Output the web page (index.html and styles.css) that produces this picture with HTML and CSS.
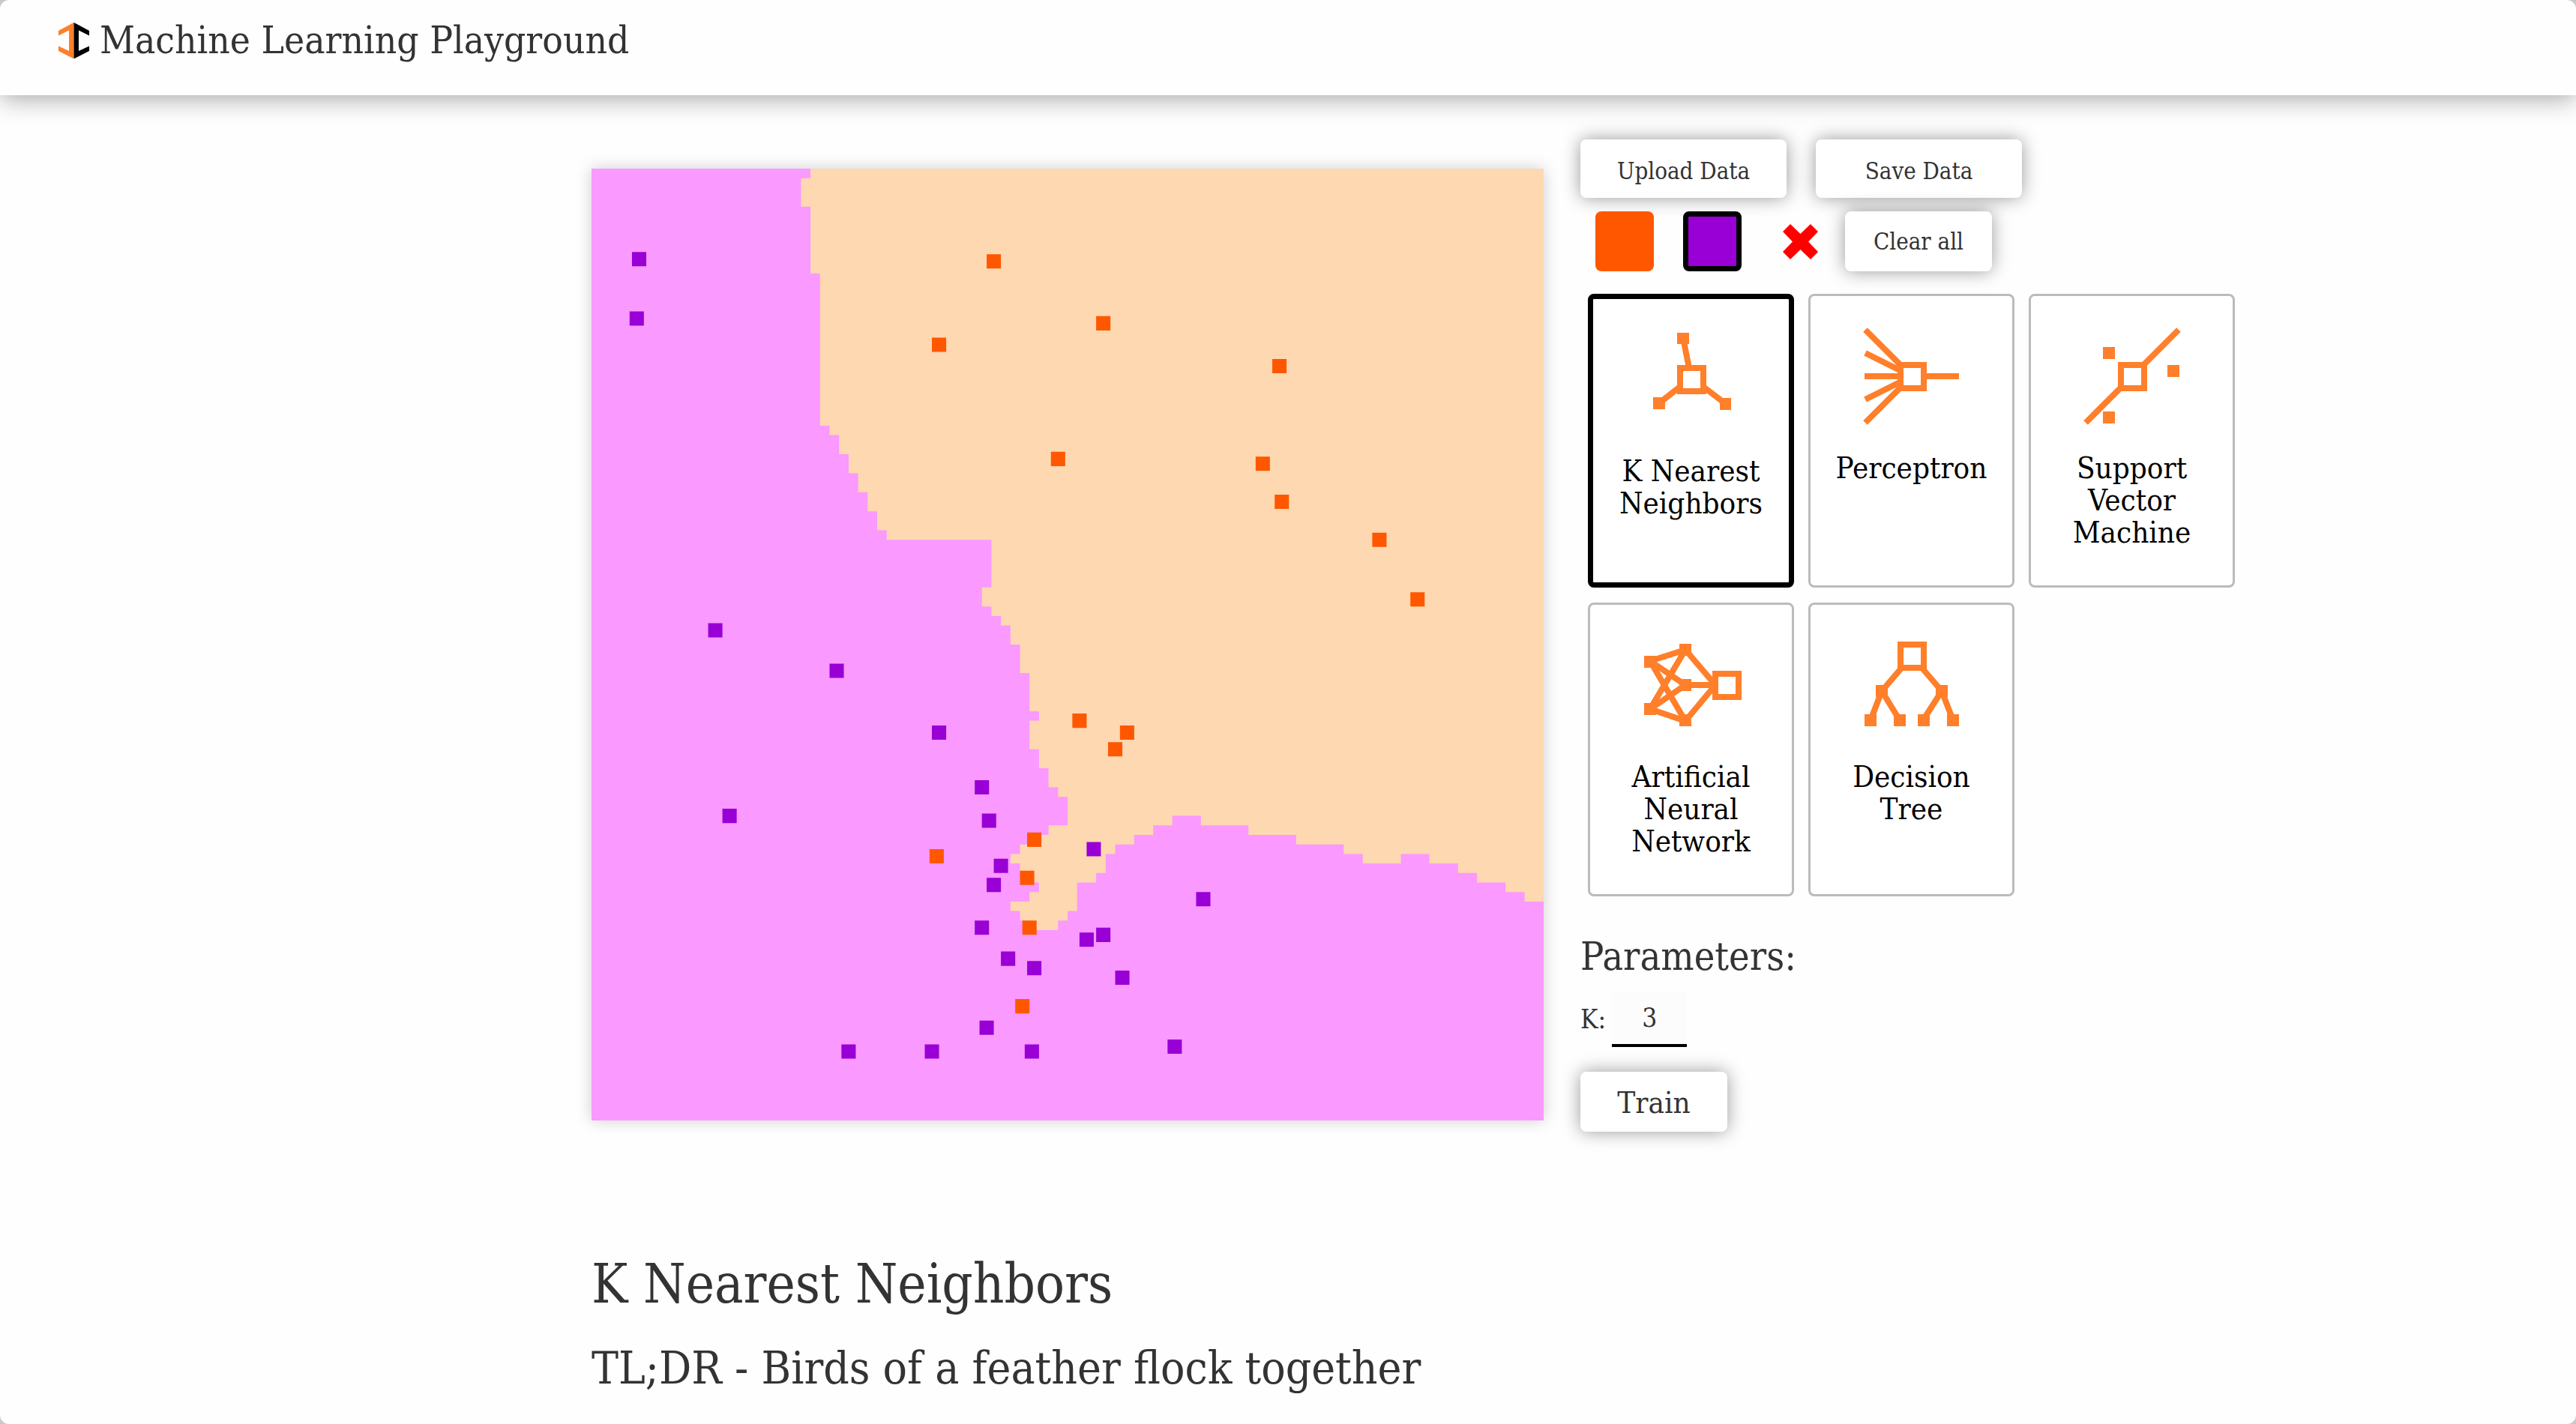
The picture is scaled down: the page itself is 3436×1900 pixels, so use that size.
FILE: index.html
```html
<!DOCTYPE html>
<html lang="en">
<head>
<meta charset="utf-8">
<title>Machine Learning Playground</title>
<link rel="stylesheet" href="styles.css">
</head>
<body>
<div class="page">
  <header class="topbar">
    <a class="brand" href="#">
      <svg class="brand-logo" viewBox="0 0 41 48" aria-hidden="true">
        <path fill="#ff7f2a" d="M20.500 0 0 11v6.500l14-7v27.500l-14-6.500v6.500l20.500 10.500z"/>
        <path fill="#000" d="M20.500 0 41 11v6.500l-14-7v27.500l14-6.500v6.500l-20.500 10.500z"/>
      </svg>
      <span>Machine Learning Playground</span>
    </a>
  </header>

  <main class="content">
    <section class="workspace">
      <svg class="plot" viewBox="0 0 400 400" role="img" aria-label="Classified points">
        <rect width="400" height="400" fill="#fa99ff"/>
        <path fill="#fed8b1" transform="scale(4)" d="M23 0V1H22V4H23V11H24V27H25V28H26V30H27V32H28V34H29V36H30V38H31V39H42V44H41V46H42V47H43V48H44V50H45V53H46V57H47V58H46V61H47V63H48V65H49V66H50V69H48V70H47V71H45V72H44V73H45V74H46V75H47V76H46V77H44V78H45V79H46V80H49V79H50V78H51V75H53V74H54V72H55V71H57V70H59V69H61V68H64V69H69V70H74V71H79V72H81V73H85V72H88V73H91V74H93V75H96V76H98V77H100V0Z"/>
        <path fill="#9800d6" d="M17 35h6v6h-6zM16 60h6v6h-6zM49 191h6v6h-6zM100 208h6v6h-6zM143 234h6v6h-6zM161 257h6v6h-6zM164 271h6v6h-6zM169 290h6v6h-6zM166 298h6v6h-6zM161 316h6v6h-6zM172 329h6v6h-6zM183 333h6v6h-6zM163 358h6v6h-6zM140 368h6v6h-6zM182 368h6v6h-6zM205 321h6v6h-6zM212 319h6v6h-6zM220 337h6v6h-6zM242 366h6v6h-6zM254 304h6v6h-6zM208 283h6v6h-6zM55 269h6v6h-6zM105 368h6v6h-6z"/>
        <path fill="#ff5700" d="M166 36h6v6h-6zM143 71h6v6h-6zM212 62h6v6h-6zM193 119h6v6h-6zM286 80h6v6h-6zM279 121h6v6h-6zM287 137h6v6h-6zM328 153h6v6h-6zM344 178h6v6h-6zM202 229h6v6h-6zM222 234h6v6h-6zM217 241h6v6h-6zM183 279h6v6h-6zM142 286h6v6h-6zM180 295h6v6h-6zM181 316h6v6h-6zM178 349h6v6h-6z"/>
      </svg>

      <div class="controls">
        <div class="row row-data">
          <button class="btn btn-wide" type="button">Upload Data</button>
          <button class="btn btn-wide" type="button">Save Data</button>
        </div>
        <div class="row row-brush">
          <button class="swatch swatch-orange" type="button" aria-label="Orange"></button>
          <button class="swatch swatch-purple is-active" type="button" aria-label="Purple"></button>
          <button class="swatch swatch-erase" type="button" aria-label="Erase">
            <svg class="cross" viewBox="0 0 47 47" aria-hidden="true"><path fill="#f00" d="M10 0 23.500 13 37 0 47 10 34 23.500 47 37 37 47 23.500 34 10 47 0 37 13 23.500 0 10z"/></svg>
          </button>
          <button class="btn btn-clear" type="button">Clear all</button>
        </div>

        <div class="models">
          <button class="model is-active" type="button">
            <svg class="model-icon" viewBox="0 0 140 140" aria-hidden="true">
              <path class="line" d="M59 15 70 70M27 102 70 68M116 103 70 68"/>
              <path class="dot" d="M51 8h16v15H51zM19 94h16v16H19zM108 95h15v16h-15z"/>
              <path class="node" d="M55 55h31v31H55z"/>
            </svg>
            K Nearest Neighbors
          </button>
          <button class="model" type="button">
            <svg class="model-icon" viewBox="0 0 140 140" aria-hidden="true">
              <path class="line" d="M8 8 70 70M8 39 70 70M7 70H133M8 101 70 70M8 132 70 70"/>
              <path class="node" d="M55 55h31v31H55z"/>
            </svg>
            Perceptron
          </button>
          <button class="model" type="button">
            <svg class="model-icon" viewBox="0 0 140 140" aria-hidden="true">
              <path class="line" d="M8 132 132 8"/>
              <path class="dot" d="M31 31h16v16H31zM117 55h16v16h-16zM31 117h16v16H31z"/>
              <path class="node" d="M55 55h31v31H55z"/>
            </svg>
            Support Vector Machine
          </button>
          <button class="model" type="button">
            <svg class="model-icon" viewBox="0 0 140 140" aria-hidden="true">
              <path class="line" d="M15 38 62 23 15 102 62 118 15 38 62 70 15 102M62 23 102 70 62 118M62 70H100"/>
              <path class="dot" d="M7 31h16v16H7zM7 94h16v16H7zM54 15h16v16H54zM54 62h16v16H54zM54 109h16v16H54z"/>
              <path class="node" d="M102 55h31v31h-31z"/>
            </svg>
            Artificial Neural Network
          </button>
          <button class="model" type="button">
            <svg class="model-icon" viewBox="0 0 140 140" aria-hidden="true">
              <path class="line" d="M60 43 30 78M80 43 110 78M15 117 30 78 54 117M85 117 110 78 125 117"/>
              <path class="dot" d="M22 70h16v16H22zM102 70h16v16h-16zM7 109h16v16H7zM46 109h16v16H46zM78 109h16v16H78zM117 109h16v16h-16z"/>
              <path class="node" d="M55 16h31v31H55z"/>
            </svg>
            Decision Tree
          </button>
        </div>

        <h3 class="params-title">Parameters:</h3>
        <div class="param">
          <label for="k">K:</label>
          <input class="param-input" id="k" type="text" value="3">
        </div>
        <button class="btn btn-train" type="button">Train</button>
      </div>
    </section>

    <article class="article">
      <h1>K Nearest Neighbors</h1>
      <h2>TL;DR - Birds of a feather flock together</h2>
      <p>Every model votes in favour of similar labels</p>
    </article>
  </main>
</div>
</body>
</html>
```
FILE: styles.css
```css
* { box-sizing: border-box; }

body {
  margin: 0;
  background: #c8c8c8;
  color: #333;
  font-family: "Roboto Slab", "DejaVu Serif Condensed", "DejaVu Serif", serif;
}

.page {
  height: 100vh;
  overflow: hidden auto;
  scrollbar-width: none;
  border-radius: 12px;
  background: #fefefe;
}

.topbar {
  padding: 22px 78px 41px;
  background: #fefefe;
  box-shadow: 0 4px 32px rgba(0, 0, 0, .36);
}

.brand {
  display: flex;
  align-items: center;
  gap: 14px;
  color: inherit;
  font-size: 51px;
  line-height: 64px;
  text-decoration: none;
}

.brand-logo { width: 41px; height: 48px; }

.content { padding: 59px 40px 80px max(40px, calc(50% - 929px)); }

.workspace {
  display: flex;
  align-items: flex-start;
  gap: 49px;
}

.plot {
  flex: 0 1 1270px;
  min-width: 0;
  margin-top: 39px;
  aspect-ratio: 1;
  box-shadow: 0 0 20px rgba(0, 0, 0, .2);
}

.controls { flex: 0 1 900px; }

.row { display: flex; align-items: center; }
.row-data { gap: 39px; }
.row-brush { gap: 39px; margin-top: 18px; padding-left: 20px; }

.btn {
  height: 80px;
  padding: 5px 0 0;
  border: 0;
  border-radius: 8px;
  background: #fff;
  box-shadow: 0 0 24px rgba(0, 0, 0, .4);
  color: #333;
  font: inherit;
  font-size: 31px;
}

.btn-wide { width: 275px; height: 78px; }
.btn-clear { width: 196px; margin-left: -18px; padding: 0; }
.btn-train { display: block; width: 196px; margin-top: 33px; padding: 2px 0 0; font-size: 40px; }

.swatch {
  display: grid;
  place-items: center;
  width: 78px;
  height: 80px;
  padding: 0;
  border: 0;
  border-radius: 8px;
}

.swatch-orange { background: #ff5700; }
.swatch-purple { background: #9800d6; }
.swatch-erase { background: none; }
.swatch.is-active { border: 7px solid #000; }
.cross { width: 47px; height: 47px; }

.models {
  display: grid;
  grid-template-columns: repeat(auto-fill, 275px);
  gap: 20px 19px;
  margin-top: 30px;
  padding-left: 10px;
}

.model {
  display: flex;
  flex-direction: column;
  align-items: center;
  gap: 31px;
  min-height: 392px;
  padding: 37px 20px;
  border: 3px solid #bbb;
  border-radius: 8px;
  background: #fff;
  color: #000;
  font: inherit;
  font-size: 40px;
  line-height: 43px;
}

.model.is-active { border: 7px solid #000; }
.model-icon { width: 140px; height: 140px; flex: none; }

.line { fill: none; stroke: #ff7f2a; stroke-width: 8; }
.dot { fill: #ff7f2a; }
.node { fill: #fff; stroke: #ff7f2a; stroke-width: 8; }

.params-title {
  margin: 50px 0 16px;
  font-size: 52px;
  font-weight: 400;
  line-height: 60px;
}

.param {
  display: flex;
  align-items: center;
  gap: 8px;
  font-size: 35px;
}

.param-input {
  width: 100px;
  height: 75px;
  padding: 0;
  border: 0;
  border-bottom: 4px solid #000;
  background: #fcfcfc;
  color: inherit;
  font: inherit;
  text-align: center;
}

.article { margin-top: 158px; }

.article h1,
.article h2 { font-weight: 400; }

.article h1 { margin: 0; font-size: 72px; line-height: 90px; }
.article h2 { margin: 29px 0 28px; font-size: 60px; line-height: 76px; }
.article p { margin: 0; font-size: 39px; line-height: 54px; }
```
